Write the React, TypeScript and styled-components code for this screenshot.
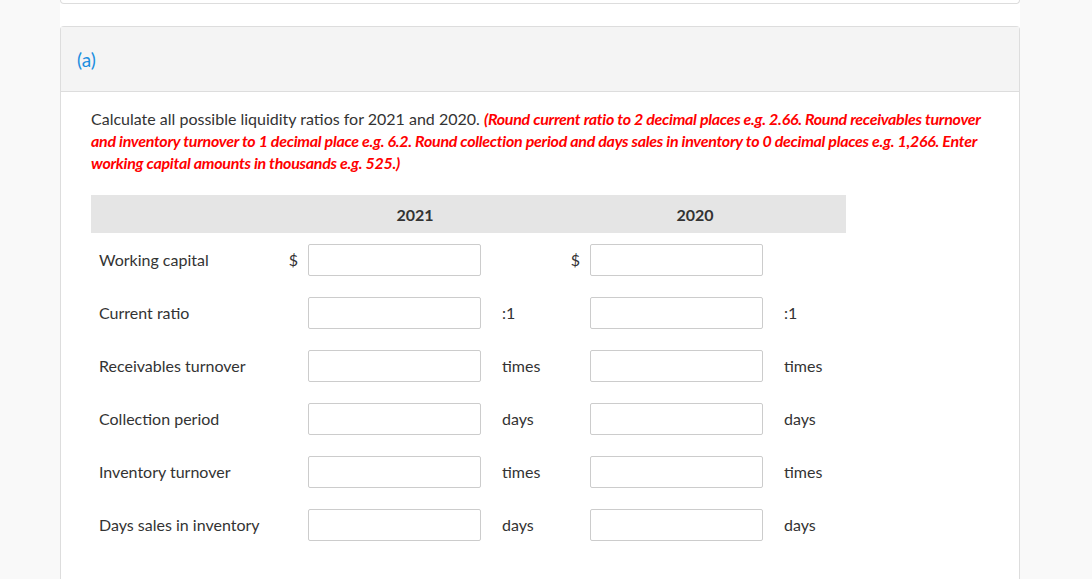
import React from "react";
import styled, { createGlobalStyle } from "styled-components";

const Global = createGlobalStyle`
  html, body { margin: 0; padding: 0; background: #f9f9f9; }
  body { font-family: Lato, "Open Sans", Arial, sans-serif; color: #333; }
`;

const Column = styled.div`
  margin-left: 60px;
  width: 960px;
  min-height: 579px;
  background: #fff;
  display: flex;
  flex-direction: column;
`;

const PrevCard = styled.div`
  height: 3px;
  border: 1px solid #ddd;
  border-top: none;
  border-radius: 0 0 4px 4px;
`;

const Card = styled.section`
  margin-top: 22px;
  border: 1px solid #ddd;
  border-bottom: none;
  border-radius: 4px 4px 0 0;
  flex: 1;
`;

const CardHeader = styled.div`
  height: 64px;
  background: #f4f4f4;
  border-bottom: 1px solid #ddd;
  display: flex;
  align-items: center;
  padding: 0 16px;
  font-size: 19px;
  color: #1b8ee0;
`;

const Body = styled.div`
  padding: 16px 30px 0 30px;
`;

const Prompt = styled.p`
  margin: 0;
  font-size: 16px;
  line-height: 22px;
  color: #333;
  max-width: 900px;
`;

const Hint = styled.span`
  color: #ff0000;
  font-weight: 700;
  font-style: italic;
  letter-spacing: -0.28px;
`;

const Table = styled.div`
  margin-top: 21px;
  display: grid;
  grid-template-columns: 195px 22px 173px 63px 46px 173px 83px;
  width: 755px;
`;

const HeadCell = styled.div<{ $span?: number }>`
  grid-column: span ${(p) => p.$span ?? 1};
  background: #e5e5e5;
  height: 38px;
  display: flex;
  align-items: center;
  justify-content: center;
  font-size: 16px;
  font-weight: 700;
  color: #333;
`;

const Label = styled.div`
  height: 53px;
  display: flex;
  align-items: center;
  padding-left: 8px;
  font-size: 16px;
  color: #333;
`;

const Dollar = styled.div`
  height: 53px;
  display: flex;
  align-items: center;
  justify-content: flex-end;
  padding-right: 10px;
  font-size: 16px;
  color: #333;
`;

const InputCell = styled.div`
  height: 53px;
  display: flex;
  align-items: center;
`;

const Field = styled.input`
  box-sizing: border-box;
  width: 173px;
  height: 32px;
  border: 1px solid #ccc;
  border-radius: 2px;
  background: #fff;
  padding: 4px 8px;
  font: inherit;
  outline: none;
`;

const Unit = styled.div`
  height: 53px;
  display: flex;
  align-items: center;
  padding-left: 21px;
  font-size: 16px;
  color: #333;
`;

const rows: { label: string; dollar: boolean; unit: string }[] = [
  { label: "Working capital", dollar: true, unit: "" },
  { label: "Current ratio", dollar: false, unit: ":1" },
  { label: "Receivables turnover", dollar: false, unit: "times" },
  { label: "Collection period", dollar: false, unit: "days" },
  { label: "Inventory turnover", dollar: false, unit: "times" },
  { label: "Days sales in inventory", dollar: false, unit: "days" },
];

export default function App() {
  return (
    <>
      <Global />
      <Column>
        <PrevCard />
        <Card>
          <CardHeader>(a)</CardHeader>
          <Body>
            <Prompt>
              Calculate all possible liquidity ratios for 2021 and 2020.{" "}
              <Hint>
                (Round current ratio to 2 decimal places e.g. 2.66. Round receivables turnover and
                inventory turnover to 1 decimal place e.g. 6.2. Round collection period and days
                sales in inventory to 0 decimal places e.g. 1,266. Enter working capital amounts in
                thousands e.g. 525.)
              </Hint>
            </Prompt>
            <Table>
              <HeadCell />
              <HeadCell $span={3}>2021</HeadCell>
              <HeadCell $span={3}>2020</HeadCell>
              {rows.map((r) => (
                <React.Fragment key={r.label}>
                  <Label>{r.label}</Label>
                  <Dollar>{r.dollar ? "$" : ""}</Dollar>
                  <InputCell>
                    <Field type="text" />
                  </InputCell>
                  <Unit>{r.unit}</Unit>
                  <Dollar>{r.dollar ? "$" : ""}</Dollar>
                  <InputCell>
                    <Field type="text" />
                  </InputCell>
                  <Unit>{r.unit}</Unit>
                </React.Fragment>
              ))}
            </Table>
          </Body>
        </Card>
      </Column>
    </>
  );
}
